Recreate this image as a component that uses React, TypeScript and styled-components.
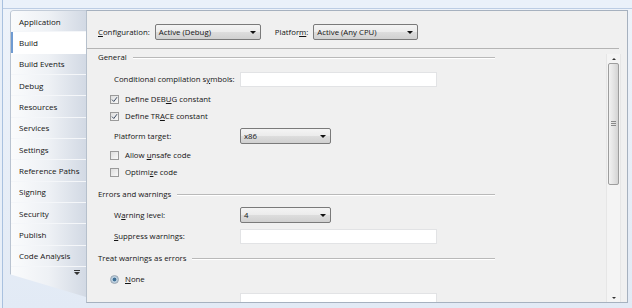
import React from "react";
import styled, { createGlobalStyle } from "styled-components";

const GlobalStyle = createGlobalStyle`
  html, body { margin: 0; padding: 0; }
  body {
    width: 632px;
    height: 308px;
    overflow: hidden;
    background: #e8eff8;
    font-family: "Open Sans", "Noto Sans", "DejaVu Sans", sans-serif;
    font-size: 7.8px;
    color: #141414;
  }
`;

const TABS = [
  "Application",
  "Build",
  "Build Events",
  "Debug",
  "Resources",
  "Services",
  "Settings",
  "Reference Paths",
  "Signing",
  "Security",
  "Publish",
  "Code Analysis",
];

const Frame = styled.div`
  width: 630px;
  height: 308px;
  box-sizing: border-box;
  border-left: 1px solid #a9c1df;
  margin-left: 2px;
  padding: 10px 4px 5px 7px;
  display: flex;
  background: linear-gradient(#eef3fa, #e2eaf5);
  box-shadow: inset 0 8px 0 #eaf1fa, inset 0 9px 0 #bccde4;
`;

const TabStrip = styled.div`
  width: 76px;
  flex: none;
  display: flex;
  flex-direction: column;
  position: relative;
  z-index: 1;
`;

const TabList = styled.div`
  height: 256px;
  display: flex;
  flex-direction: column;
  border-left: 1px solid #b9c3d0;
  border-top: 1px solid #c3ccd8;
  border-top-left-radius: 4px;
  overflow: hidden;
`;

const Tab = styled.div<{ $active?: boolean }>`
  flex: 1;
  display: flex;
  align-items: center;
  padding-left: 8px;
  font-size: 8px;
  border-bottom: 1px solid ${(p) => (p.$active ? "#ffffff" : "#f4f6f9")};
  background: ${(p) =>
    p.$active ? "#ffffff" : "linear-gradient(90deg, #fafbfc 0%, #eef1f5 50%, #d2d9e4 100%)"};
  box-shadow: ${(p) => (p.$active ? "inset 2px 0 0 #6f9bd2" : "none")};
  margin-right: ${(p) => (p.$active ? "-2px" : "0")};
`;

const TabFoot = styled.div`
  height: 30px;
  border-left: 1px solid #b9c3d0;
  background: linear-gradient(90deg, #fafbfc 0%, #eef1f5 50%, #d2d9e4 100%);
  clip-path: polygon(0 0, 100% 0, 100% 100%, 0 24%);
  display: flex;
  justify-content: flex-end;
  padding: 3px 6px 0 0;
  box-sizing: border-box;
`;

const Panel = styled.div`
  flex: 1;
  background: #f0f0f0;
  border: 1px solid #a6b1bf;
  border-left-color: #b6c0cc;
  display: flex;
  flex-direction: column;
  min-width: 0;
`;

const Header = styled.div`
  height: 38px;
  display: flex;
  align-items: center;
  padding: 5px 0 0 11px;
  box-sizing: border-box;
  gap: 5px;
  border-bottom: 1px solid #b4b4b4;
  margin-right: 8px;
`;

const HeaderLabel = styled.span<{ $gap?: number }>`
  margin-left: ${(p) => p.$gap ?? 0}px;
`;

const Body = styled.div`
  flex: 1;
  display: flex;
  min-height: 0;
`;

const Form = styled.div`
  flex: 1;
  padding-left: 11px;
  overflow: hidden;
`;

const Section = styled.div<{ $mt?: number }>`
  display: flex;
  align-items: center;
  height: 16px;
  margin-top: ${(p) => p.$mt ?? 0}px;
  margin-right: 111px;
  gap: 6px;
  &::after {
    content: "";
    flex: 1;
    height: 1px;
    background: #b9b9b9;
    box-shadow: 0 1px 0 #ffffff;
  }
`;

const Row = styled.div<{ $mt: number }>`
  display: flex;
  align-items: center;
  height: 16px;
  margin-top: ${(p) => p.$mt}px;
  padding-left: 16px;
`;

const Label = styled.span`
  width: 126px;
  flex: none;
`;

const TextBox = styled.div`
  width: 197px;
  height: 15px;
  background: #ffffff;
  border: 1px solid #e2e3e5;
  box-sizing: border-box;
`;

const Select = styled.div<{ $w: number }>`
  width: ${(p) => p.$w}px;
  height: 16px;
  box-sizing: border-box;
  border: 1px solid #7a7a7a;
  border-radius: 2px;
  background: linear-gradient(#f4f4f4 0%, #ebebeb 50%, #dddddd 51%, #d0d0d0 100%);
  display: flex;
  align-items: center;
  padding: 0 4px 0 3px;
  justify-content: space-between;
  &::after {
    content: "";
    border-left: 3px solid transparent;
    border-right: 3px solid transparent;
    border-top: 3px solid #111;
  }
`;

const Check = styled.span`
  width: 9px;
  height: 9px;
  flex: none;
  box-sizing: border-box;
  border: 1px solid #9a9a9a;
  background: linear-gradient(135deg, #dedede, #f8f8f8);
  margin: 0 6px 0 -4px;
  display: inline-flex;
  align-items: center;
  justify-content: center;
`;

const Radio = styled.span`
  width: 9px;
  height: 9px;
  flex: none;
  box-sizing: border-box;
  border-radius: 50%;
  border: 1px solid #9aa6b2;
  background: radial-gradient(circle, #3f6f95 0 1.6px, #b9cddd 2.2px 100%);
  margin: 0 6px 0 -4px;
`;

const ScrollBar = styled.div`
  width: 13px;
  margin: 5px 6px 0 0;
  display: flex;
  flex-direction: column;
  align-items: center;
  border-left: 1px solid #e6e6e6;
  border-right: 1px solid #e6e6e6;
  background: #f4f4f4;
`;

const ScrollArrow = styled.div<{ $down?: boolean }>`
  height: 9px;
  flex: none;
  display: flex;
  align-items: center;
  &::after {
    content: "";
    border-left: 2px solid transparent;
    border-right: 2px solid transparent;
    ${(p) =>
      p.$down ? "border-top: 2px solid #333;" : "border-bottom: 2px solid #333;"}
  }
`;

const Thumb = styled.div`
  width: 11px;
  height: 122px;
  flex: none;
  box-sizing: border-box;
  border: 1px solid #9d9d9d;
  border-radius: 2px;
  background: linear-gradient(90deg, #f2f2f2, #e4e4e4 50%, #d4d4d4);
  display: flex;
  align-items: center;
  justify-content: center;
`;

const Track = styled.div`
  flex: 1;
`;

const u = (s: string) => <u>{s}</u>;

function CheckMark() {
  return (
    <svg width="7" height="7" viewBox="0 0 7 7">
      <path d="M1 3.6 L2.8 5.5 L6 1.2" fill="none" stroke="#3d4c63" strokeWidth="1" />
    </svg>
  );
}

function Grip() {
  return (
    <svg width="5" height="6" viewBox="0 0 5 6">
      <path d="M0 0.5 H5 M0 2.5 H5 M0 4.5 H5" stroke="#8a8a8a" strokeWidth="1" />
    </svg>
  );
}

export default function App() {
  return (
    <>
      <GlobalStyle />
      <Frame>
        <TabStrip>
          <TabList>
            {TABS.map((t) => (
              <Tab key={t} $active={t === "Build"}>
                {t}
              </Tab>
            ))}
          </TabList>
          <TabFoot>
            <svg width="6" height="5" viewBox="0 0 6 5">
              <path d="M0 0 H6 V1 H0 Z M0 2 H6 L3 5 Z" fill="#333" />
            </svg>
          </TabFoot>
        </TabStrip>
        <Panel>
          <Header>
            <HeaderLabel>{u("C")}onfiguration:</HeaderLabel>
            <Select $w={106}>Active (Debug)</Select>
            <HeaderLabel $gap={9}>Platfor{u("m")}:</HeaderLabel>
            <Select $w={105}>Active (Any CPU)</Select>
          </Header>
          <Body>
            <Form>
              <Section>General</Section>
              <Row $mt={6}>
                <Label>Conditional compilation s{u("y")}mbols:</Label>
                <TextBox />
              </Row>
              <Row $mt={4}>
                <Check>
                  <CheckMark />
                </Check>
                <span>Define DEB{u("U")}G constant</span>
              </Row>
              <Row $mt={1}>
                <Check>
                  <CheckMark />
                </Check>
                <span>Define TR{u("A")}CE constant</span>
              </Row>
              <Row $mt={4}>
                <Label>Platform target:</Label>
                <Select $w={91}>x86</Select>
              </Row>
              <Row $mt={3}>
                <Check />
                <span>Allow {u("u")}nsafe code</span>
              </Row>
              <Row $mt={1}>
                <Check />
                <span>Optimi{u("z")}e code</span>
              </Row>
              <Section $mt={6}>Errors and warnings</Section>
              <Row $mt={5}>
                <Label>W{u("a")}rning level:</Label>
                <Select $w={91}>4</Select>
              </Row>
              <Row $mt={5}>
                <Label>{u("S")}uppress warnings:</Label>
                <TextBox />
              </Row>
              <Section $mt={6}>Treat warnings as errors</Section>
              <Row $mt={5}>
                <Radio />
                <span>{u("N")}one</span>
              </Row>
              <Row $mt={5}>
                <Label />
                <TextBox />
              </Row>
            </Form>
            <ScrollBar>
              <ScrollArrow />
              <Thumb>
                <Grip />
              </Thumb>
              <Track />
              <ScrollArrow $down />
            </ScrollBar>
          </Body>
        </Panel>
      </Frame>
    </>
  );
}
